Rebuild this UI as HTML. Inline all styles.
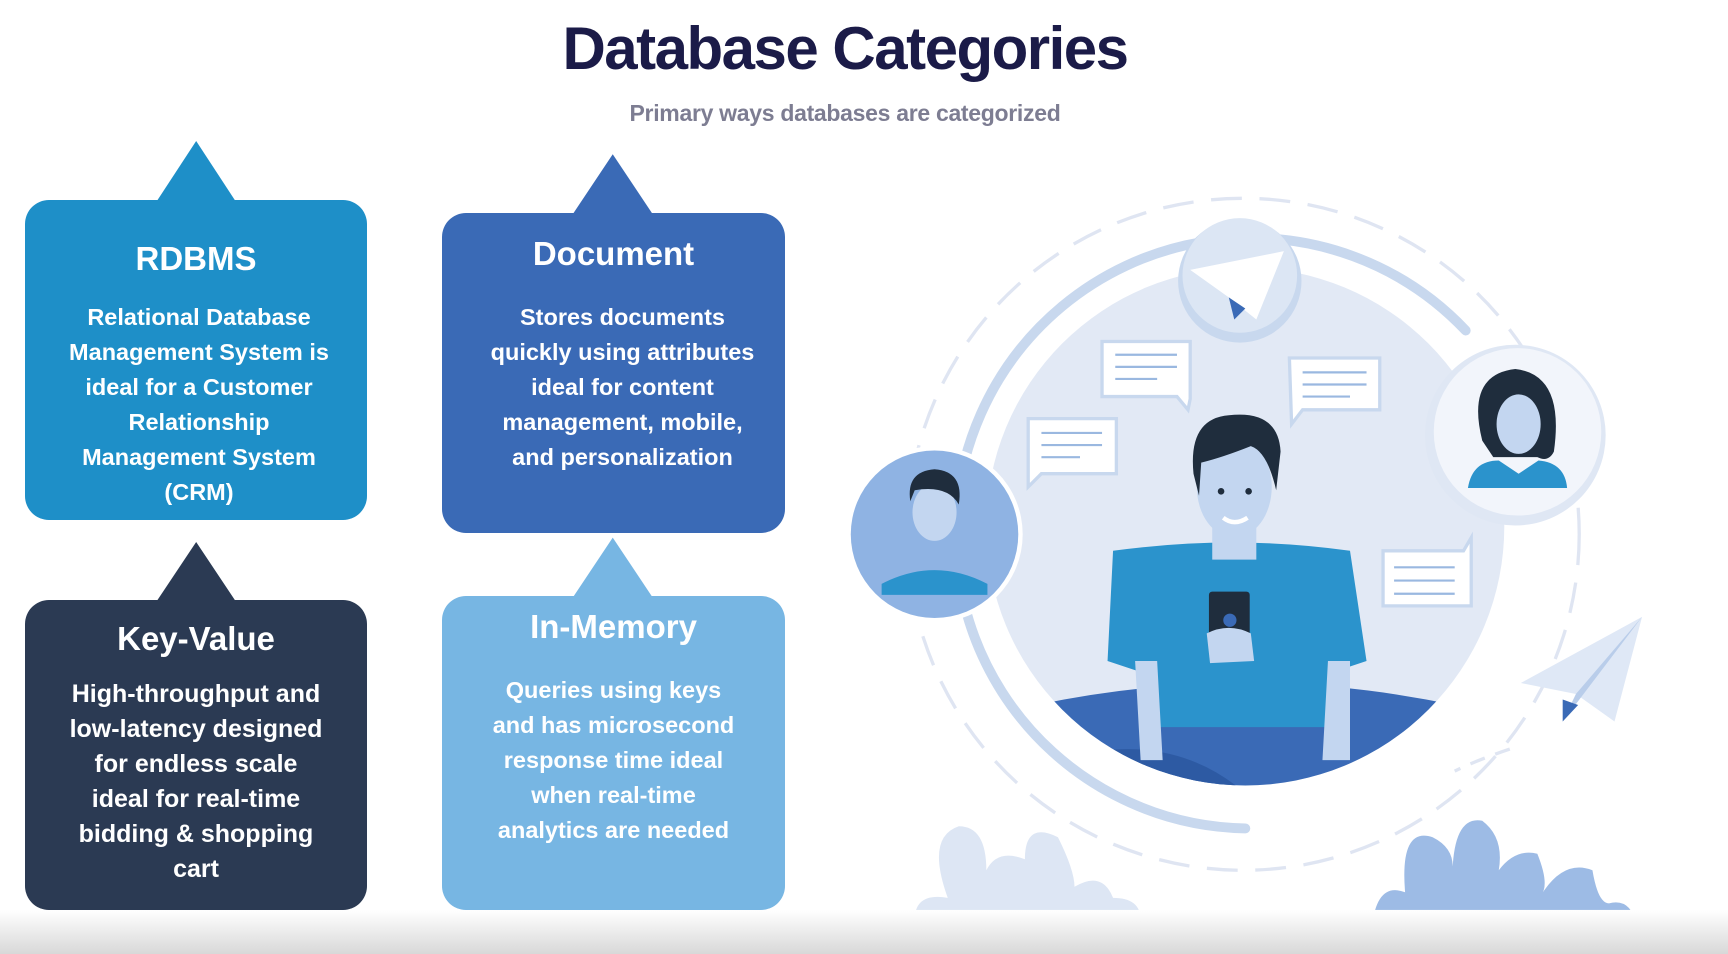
<!DOCTYPE html>
<html><head><meta charset="utf-8"><style>
html,body{margin:0;padding:0}
body{width:1728px;height:954px;position:relative;overflow:hidden;background:#fff;font-family:"Liberation Sans","DejaVu Sans",sans-serif}
svg.bg{position:absolute;left:0;top:0}
.t{position:absolute;left:0;width:1690px;text-align:center}
h1{position:absolute;margin:0;left:0;width:1690px;top:14px;text-align:center;font-size:60px;font-weight:bold;color:#1b1b48;letter-spacing:-1.5px}
.sub{top:100px;font-size:23px;font-weight:bold;color:#7d7d92;letter-spacing:-0.3px}
.box{position:absolute;color:#fff;text-align:center;font-weight:bold;border-radius:24px}
.box .h{font-size:33px;margin-bottom:14px}
.box .b{font-size:23.5px;line-height:35px}
</style></head><body>
<svg class="bg" width="1728" height="954" viewBox="0 0 1568 866" preserveAspectRatio="none">
<defs><clipPath id="c"><circle cx="1130" cy="478" r="235"/></clipPath>
<linearGradient id="g" x1="0" y1="0" x2="0" y2="1"><stop offset="0" stop-color="#fff"/><stop offset="1" stop-color="#d8d8d8"/></linearGradient></defs>
<polygon points="178,128 142,183 214,183" fill="#1e8fc8"/>
<polygon points="556,140 520,194 592,194" fill="#3a6ab6"/>
<polygon points="178,492 142,546 214,546" fill="#2b3a53"/>
<polygon points="556,488 520,542 592,542" fill="#77b6e3"/>
<circle cx="1128" cy="485" r="305" fill="none" stroke="#dfe5f2" stroke-width="3" stroke-dasharray="28 16"/>
<path d="M1330,300 A268,268 0 1 0 1130,752" fill="none" stroke="#c8d8ee" stroke-width="9" stroke-linecap="round"/>
<circle cx="1130" cy="478" r="235" fill="#e2e9f5"/>
<g clip-path="url(#c)">
<path d="M940,640 Q1130,600 1320,640 L1320,730 L940,730Z" fill="#3a6ab6"/>
<path d="M960,690 Q1060,660 1130,720 L960,730Z" fill="#2d5aa3"/>
<path d="M1010,500 Q1120,485 1225,500 L1240,600 L1210,610 L1205,660 L1040,660 L1035,610 L1005,600Z" fill="#2b93cc"/>
<path d="M1030,600 L1050,600 L1055,690 L1035,690Z M1205,600 L1225,600 L1225,690 L1200,690Z" fill="#c3d6f0"/>
<rect x="1100" y="478" width="40" height="30" fill="#c3d6f0"/>
</g>
<ellipse cx="1120" cy="442" rx="34" ry="46" fill="#c3d6f0"/>
<path d="M1083,430 Q1078,380 1115,377 Q1160,372 1162,410 L1158,445 Q1150,410 1135,405 Q1110,415 1090,420 L1088,450Z" fill="#1f2d3d"/>
<circle cx="1108" cy="446" r="3" fill="#1f2d3d"/><circle cx="1133" cy="446" r="3" fill="#1f2d3d"/>
<path d="M1110,470 Q1120,478 1132,470" stroke="#fff" stroke-width="4" fill="none"/>
<rect x="1097" y="537" width="37" height="44" rx="3" fill="#1f2d3d"/><circle cx="1116" cy="563" r="6" fill="#3a6ab6"/>
<path d="M1095,575 Q1115,565 1135,575 L1138,600 L1098,602Z" fill="#c3d6f0"/>
<circle cx="1125" cy="255" r="56" fill="#c8d8ee"/>
<circle cx="1125" cy="250" r="52" fill="#dce6f4"/>
<path d="M1080,245 L1165,228 L1140,290 L1115,270Z" fill="#fff"/><path d="M1115,270 L1120,290 L1130,280Z" fill="#3a6ab6"/>
<circle cx="848" cy="485" r="80" fill="#fff"/><circle cx="848" cy="485" r="76" fill="#8fb3e3"/>
<path d="M800,530 Q848,505 896,530 L896,540 L800,540Z" fill="#2b93cc"/>
<ellipse cx="848" cy="465" rx="20" ry="26" fill="#c3d6f0"/><path d="M826,455 Q822,428 848,426 Q875,428 870,458 Q860,440 830,445Z" fill="#1f2d3d"/>
<circle cx="1375" cy="395" r="82" fill="#dfe7f4"/><circle cx="1377" cy="392" r="76" fill="#f2f5fb"/>
<path d="M1345,400 Q1330,340 1375,335 Q1420,340 1410,410 Q1405,420 1395,415 L1355,415Z" fill="#1f2d3d"/>
<ellipse cx="1378" cy="385" rx="20" ry="27" fill="#c3d6f0"/>
<path d="M1332,443 Q1336,418 1360,418 L1378,430 L1396,418 Q1420,420 1422,443Z" fill="#2b93cc"/>
<g fill="#fff" stroke="#c8d8ee" stroke-width="3">
<path d="M1000,310 L1080,310 L1080,362 L1078,372 L1068,360 L1000,360Z"/>
<path d="M1170,325 L1252,325 L1252,372 L1182,372 L1172,385Z"/>
<path d="M933,380 L1013,380 L1013,430 L945,430 L933,442Z"/>
<path d="M1255,500 L1328,500 L1335,488 L1335,550 L1255,550Z"/>
</g>
<g stroke="#9ab8e0" stroke-width="2">
<line x1="1012" y1="322" x2="1068" y2="322"/><line x1="1012" y1="333" x2="1068" y2="333"/><line x1="1012" y1="344" x2="1050" y2="344"/>
<line x1="1182" y1="338" x2="1240" y2="338"/><line x1="1182" y1="349" x2="1240" y2="349"/><line x1="1182" y1="360" x2="1225" y2="360"/>
<line x1="945" y1="393" x2="1000" y2="393"/><line x1="945" y1="404" x2="1000" y2="404"/><line x1="945" y1="415" x2="980" y2="415"/>
<line x1="1265" y1="515" x2="1320" y2="515"/><line x1="1265" y1="527" x2="1320" y2="527"/><line x1="1265" y1="539" x2="1320" y2="539"/>
</g>
<path d="M1380,620 L1490,560 L1465,655 L1430,630Z" fill="#dfe8f6"/><path d="M1430,630 L1490,560 L1418,655Z" fill="#b9cdea"/><path d="M1418,635 L1418,655 L1432,640Z" fill="#3a6ab6"/>
<path d="M1370,680 Q1340,690 1320,700" stroke="#dfe5f2" stroke-width="3" fill="none" stroke-dasharray="14 10"/>
<path d="M830,835 Q830,810 860,815 Q840,760 870,750 Q895,750 895,790 Q905,770 930,780 Q930,745 960,760 Q975,790 975,805 Q1000,790 1010,815 Q1035,815 1035,835Z" fill="#dde6f4"/>
<path d="M1245,840 Q1250,800 1275,810 Q1270,750 1300,760 Q1320,770 1318,790 Q1320,740 1345,745 Q1365,760 1360,790 Q1375,770 1395,775 Q1405,800 1400,810 Q1420,780 1445,790 Q1450,820 1460,820 Q1480,815 1485,840Z" fill="#9dbbe5"/>
<rect x="0" y="826" width="1568" height="40" fill="url(#g)"/>
</svg>
<h1>Database Categories</h1>
<div class="t sub">Primary ways databases are categorized</div>
<div class="box" style="left:25px;top:200px;width:342px;height:320px;background:#1e8fc8"><div class="h" style="margin-top:40px;margin-bottom:22px">RDBMS</div><div class="b" style="padding:0 34px 0 40px">Relational Database Management System is ideal for a Customer Relationship Management System (CRM)</div></div>
<div class="box" style="left:442px;top:213px;width:343px;height:320px;background:#3a6ab6"><div class="h" style="margin-top:22px;margin-bottom:27px">Document</div><div class="b" style="padding:0 0 0 18px">Stores documents<br>quickly using attributes<br>ideal for content<br>management, mobile,<br>and personalization</div></div>
<div class="box" style="left:25px;top:600px;width:342px;height:310px;background:#2b3a53"><div class="h" style="margin-top:20px;margin-bottom:19px">Key-Value</div><div class="b" style="font-size:25px">High-throughput and<br>low-latency designed<br>for endless scale<br>ideal for real-time<br>bidding &amp; shopping<br>cart</div></div>
<div class="box" style="left:442px;top:596px;width:343px;height:314px;background:#77b6e3"><div class="h" style="margin-top:12px;margin-bottom:27px">In-Memory</div><div class="b">Queries using keys<br>and has microsecond<br>response time ideal<br>when real-time<br>analytics are needed</div></div>
</body></html>
